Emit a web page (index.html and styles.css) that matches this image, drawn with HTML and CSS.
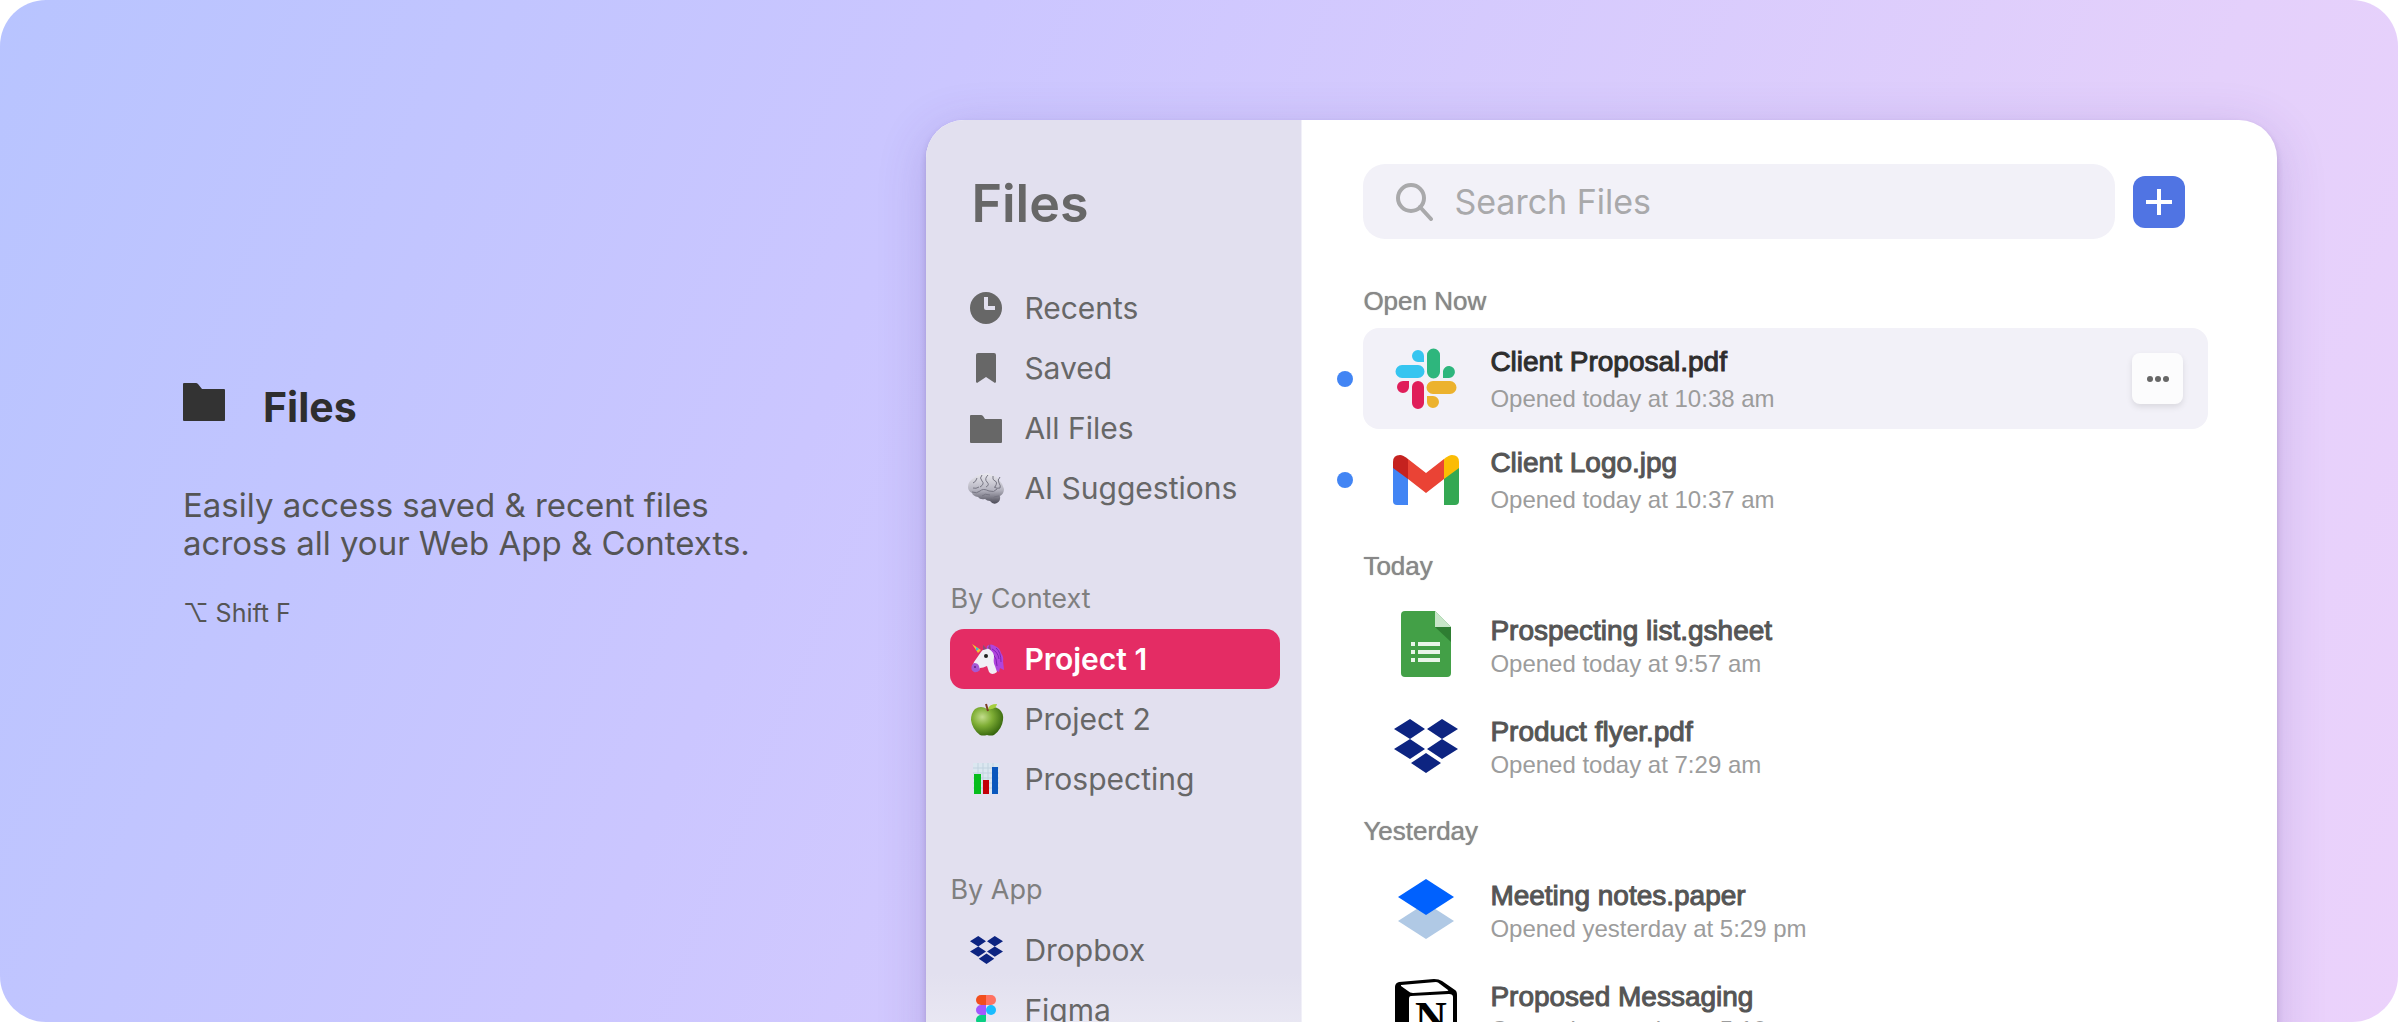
FILE: index.html
```html
<!DOCTYPE html>
<html lang="en">
  <head>
    <meta charset="UTF-8" />
    <meta name="viewport" content="width=device-width, initial-scale=1.0" />
    <title>Files</title>
    <link rel="stylesheet" href="styles.css" />
  </head>

  <body>
    <!-- shared symbols -->
    <svg class="sprite" aria-hidden="true">
      <symbol id="dropbox" viewBox="0 0 64 54">
        <path fill="#0d2481" d="M16 0 31 10 16 20 0 10zM48 0 64 10 48 20 33 10zM16 20 31 30 16 40 0 30zM48 20 64 30 48 40 33 30zM32 34 47 44 32 54 17 44z" />
      </symbol>
      <symbol id="folder" viewBox="0 0 32 28">
        <path fill="currentColor" d="M1 0h10q1 0 2 1l2 3h16q1 0 1 1v22q0 1-1 1H1q-1 0-1-1V1q0-1 1-1z" />
      </symbol>
    </svg>

    <div class="hero">
      <section class="intro">
        <h2 class="intro-title">
          <svg class="intro-icon" viewBox="0 0 42 38">
            <path fill="#333" d="M1 0h12q1 0 2 1l4 5h22q1 0 1 1v30q0 1-1 1H1q-1 0-1-1V1q0-1 1-1z" />
          </svg>
          Files
        </h2>
        <p class="intro-text">
          Easily access saved &amp; recent files<br />
          across all your Web App &amp; Contexts.
        </p>
        <p class="shortcut">&#8997; Shift F</p>
      </section>

      <div class="window">
        <aside class="sidebar">
          <h1>Files</h1>
          <nav>
            <ul class="nav-group">
              <li>
                <a href="#recents">
                  <svg class="nav-icon" viewBox="0 0 36 36">
                    <circle cx="18" cy="18" r="16" fill="#676767" />
                    <path fill="none" stroke="#e2e0ef" stroke-width="4" stroke-linejoin="round" d="M18 7v11h9" />
                  </svg>
                  Recents
                </a>
              </li>
              <li>
                <a href="#saved">
                  <svg class="nav-icon" viewBox="0 0 36 36">
                    <path fill="#676767" d="M10 3h16q2 0 2 2v27l-1 1-9-6-9 6-1-1V5q0-2 2-2z" />
                  </svg>
                  Saved
                </a>
              </li>
              <li>
                <a href="#all">
                  <svg class="nav-icon" viewBox="-2 -5 36 36"><use href="#folder" width="32" height="28" /></svg>
                  All Files
                </a>
              </li>
              <li>
                <a href="#ai">
                  <svg class="nav-icon" viewBox="0 0 36 36">
                    <defs>
                      <linearGradient id="brain" x1="0" y1="0" x2="0" y2="1">
                        <stop offset="0" stop-color="#ebeaf0" />
                        <stop offset=".55" stop-color="#b5b4c0" />
                        <stop offset="1" stop-color="#4d4c58" />
                      </linearGradient>
                    </defs>
                    <path fill="url(#brain)" d="M6 8q4-4 9-4 5-2 9 1 5 1 7 5 4 4 5 9 0 5-4 7 1 5-3 7-4 2-7-2-3 0-5-2-5 1-7-2-5-1-6-4-4-2-4-6 0-6 6-9z" />
                    <path fill="none" stroke="#777683" stroke-width="1" d="M5 13q3-1 4-5m2 9q-3 2-6 1m9-13q-3 3 0 6t-2 6m8-12q-4 4-1 7t-1 5m7-11q-1 4 2 5t0 6m5-10q-3 3-1 6t1 5M4 22q5 2 8-1t9 0q5 2 8-2M14 26q3-3 8-1m2 4q2-3 7-3m-5-9q3 2 6 1" />
                  </svg>
                  AI Suggestions
                </a>
              </li>
            </ul>

            <h3>By Context</h3>
            <ul class="nav-group">
              <li>
                <a href="#project1" class="active">
                  <svg class="nav-icon" viewBox="0 0 36 36">
                    <path fill="#b044dd" d="M19 5q4-3 8 0 5 2 6 7 3 4 2 8l1 9-4-2-1 4-6-3-7-16z" />
                    <path fill="none" stroke="#7e22b4" stroke-width="1" d="M24 8q6 3 7 10m-6-5q4 4 4 12m-1-18q5 4 5 14" />
                    <path fill="#f1eff6" d="M13 11q3-4 8-3 5 3 5 8-1 6 1 9l2 6q-5 4-8 0l-2-6q-4 2-7 2-2 4-5 3-4-2-1-9z" />
                    <path fill="#a558d4" d="M6 22q4 0 5 3l1 4q-3 3-6 2-4-2-2-7z" />
                    <path fill="#f2c530" d="m4 3 9 6-3 3z" />
                    <path fill="#3fb9d5" d="m8 6 3 2-3 2z" />
                    <path fill="#8c4a78" d="M15 9V4l4 4zm5-2 2-4 1 6z" />
                    <circle cx="18" cy="15" r="2" fill="#222" />
                    <circle cx="7" cy="26" r="1" fill="#5c2780" />
                  </svg>
                  Project 1
                </a>
              </li>
              <li>
                <a href="#project2">
                  <svg class="nav-icon" viewBox="0 0 36 36">
                    <defs>
                      <radialGradient id="apple" cx=".35" cy=".35" r=".7">
                        <stop offset="0" stop-color="#c3dd8d" />
                        <stop offset=".45" stop-color="#7fae35" />
                        <stop offset="1" stop-color="#35650d" />
                      </radialGradient>
                    </defs>
                    <path fill="url(#apple)" d="M19 8q6-4 12 0 5 4 4 11-1 9-9 15-3 1-7 0-4 1-7 0-8-6-9-15 0-7 4-11 6-4 12 0z" />
                    <path fill="none" stroke="#7a3c22" stroke-width="2" d="m18 3 2 7" />
                    <path fill="#a5cf3e" d="M20 8q1-5 9-5-1 6-9 5z" />
                  </svg>
                  Project 2
                </a>
              </li>
              <li>
                <a href="#prospecting">
                  <svg class="nav-icon" viewBox="0 0 36 36">
                    <path fill="#dbe7f0" d="M5 2h26v31H5z" />
                    <path stroke="#c1d3e0" stroke-width="1" d="M5 7h26M5 12h26M5 17h26M5 22h26M5 27h26M10 2v31M15 2v31M20 2v31M25 2v31" />
                    <path fill="#06bd1c" d="M6 13h7v20H6z" />
                    <path fill="#c30008" d="M15 19h6v14h-6z" />
                    <path fill="#0957bd" d="M24 6h6v27h-6z" />
                  </svg>
                  Prospecting
                </a>
              </li>
            </ul>

            <h3>By App</h3>
            <ul class="nav-group">
              <li>
                <a href="#dropbox-app">
                  <svg class="nav-icon" viewBox="0 0 36 36"><use href="#dropbox" x="2" y="4" width="33" height="28" /></svg>
                  Dropbox
                </a>
              </li>
              <li>
                <a href="#figma">
                  <svg class="nav-icon" viewBox="0 0 36 36">
                    <path fill="#f24e1e" d="M18 3h-5a5 5 0 0 0 0 10h5z" />
                    <path fill="#ff7262" d="M18 3h5a5 5 0 0 1 0 10h-5z" />
                    <path fill="#a259ff" d="M18 13h-5a5 5 0 0 0 0 10h5z" />
                    <circle cx="23" cy="18" r="5" fill="#1abcfe" />
                    <path fill="#0acf83" d="M13 23h5v5a5 5 0 1 1-5-5z" />
                  </svg>
                  Figma
                </a>
              </li>
            </ul>
          </nav>
        </aside>

        <main class="content">
          <div class="toolbar">
            <label class="search">
              <svg class="search-icon" viewBox="0 0 38 38">
                <circle cx="15" cy="15" r="13" fill="none" stroke="#a9a9ab" stroke-width="4" />
                <path stroke="#a9a9ab" stroke-width="4" stroke-linecap="round" d="m24 24 11 12" />
              </svg>
              <input type="search" placeholder="Search Files" aria-label="Search Files" />
            </label>
            <button class="add" aria-label="Add file">
              <svg viewBox="0 0 26 26"><path stroke="#fff" stroke-width="4" d="M13 0v26M0 13h26" /></svg>
            </button>
          </div>

          <section>
            <h4>Open Now</h4>
            <ul class="file-list open">
              <li>
                <span class="dot"></span>
                <div class="file selected">
                  <svg class="file-icon" viewBox="0 0 70 70">
                    <path fill="#36c5f0" d="M33 18h-6a6 6 0 1 1 6-6zM11 21h16a6 6 0 0 1 0 13H11a6 6 0 0 1 0-13z" />
                    <path fill="#2eb67d" d="M36 11a6 6 0 0 1 13 0v17a6 6 0 0 1-13 0zM52 34v-7a6 6 0 1 1 6 7z" />
                    <path fill="#ecb22e" d="M42 37h17a6 6 0 0 1 0 13H42a6 6 0 0 1 0-13zM36 52h6a6 6 0 1 1-6 6z" />
                    <path fill="#e01e5a" d="M18 37v6a6 6 0 1 1-6-6zM21 43a6 6 0 0 1 12 0v16a6 6 0 0 1-12 0z" />
                  </svg>
                  <div class="file-text">
                    <p class="file-name">Client Proposal.pdf</p>
                    <p class="file-date">Opened today at 10:38 am</p>
                  </div>
                  <button class="more" aria-label="More options">
                    <svg viewBox="0 0 22 6" fill="#676767">
                      <circle cx="3" cy="3" r="3" /><circle cx="11" cy="3" r="3" /><circle cx="19" cy="3" r="3" />
                    </svg>
                  </button>
                </div>
              </li>
              <li>
                <span class="dot"></span>
                <div class="file">
                  <svg class="file-icon" viewBox="0 0 70 70">
                    <path fill="#4285f4" d="M2 22v34q0 4 4 4h11V33z" />
                    <path fill="#34a853" d="M68 22v34q0 4-4 4H53V33z" />
                    <path fill="#c5221f" d="M2 23v-6q0-7 7-7 3 0 8 4v20z" />
                    <path fill="#fbbc04" d="M68 23v-6q0-7-7-7-3 0-8 4v20z" />
                    <path fill="#ea4335" d="m17 14 18 14 18-14v20L35 48 17 34z" />
                  </svg>
                  <div class="file-text">
                    <p class="file-name">Client Logo.jpg</p>
                    <p class="file-date">Opened today at 10:37 am</p>
                  </div>
                </div>
              </li>
            </ul>
          </section>

          <section>
            <h4>Today</h4>
            <ul class="file-list">
              <li>
                <div class="file">
                  <svg class="file-icon" viewBox="0 0 70 70">
                    <path fill="#43a047" d="M14 2h30l16 16v46q0 4-4 4H14q-4 0-4-4V6q0-4 4-4z" />
                    <path fill="#c8e6c9" d="m44 2 16 16H44z" />
                    <path fill="#2e7d32" d="M44 18h16v15z" />
                    <path fill="#e8f5e9" d="M20 33h4v4h-4zm7 0h22v4H27zm-7 8h4v4h-4zm7 0h22v4H27zm-7 8h4v4h-4zm7 0h22v4H27z" />
                  </svg>
                  <div class="file-text">
                    <p class="file-name">Prospecting list.gsheet</p>
                    <p class="file-date">Opened today at 9:57 am</p>
                  </div>
                </div>
              </li>
              <li>
                <div class="file">
                  <svg class="file-icon" viewBox="0 0 70 70"><use href="#dropbox" x="3" y="9" width="64" height="54" /></svg>
                  <div class="file-text">
                    <p class="file-name">Product flyer.pdf</p>
                    <p class="file-date">Opened today at 7:29 am</p>
                  </div>
                </div>
              </li>
            </ul>
          </section>

          <section>
            <h4>Yesterday</h4>
            <ul class="file-list">
              <li>
                <div class="file">
                  <svg class="file-icon" viewBox="0 0 70 70">
                    <path fill="#b0c9e5" d="m35 29 28 18-28 18L7 47z" />
                    <path fill="#0061fe" d="m35 5 28 18-28 18L7 23z" />
                  </svg>
                  <div class="file-text">
                    <p class="file-name">Meeting notes.paper</p>
                    <p class="file-date">Opened yesterday at 5:29 pm</p>
                  </div>
                </div>
              </li>
              <li>
                <div class="file">
                  <svg class="file-icon" viewBox="0 0 70 70">
                    <path fill="#000" d="M8 7 43 4q5 0 8 2l13 9q2 1 2 5v41q0 5-5 5l-37 2q-4 0-6-3L7 52q-3-3-3-6V12q0-4 4-5z" />
                    <path fill="#fff" d="m10 10 35-3q2 0 4 2l8 6q1 1-1 1l-34 2q-3 0-5-2l-7-5zM20 21l38-2q4 0 4 3v38q0 2-3 3l-37 2q-4 0-4-3V24q0-3 2-3z" />
                    <text class="notion-n" x="40" y="57" text-anchor="middle">N</text>
                  </svg>
                  <div class="file-text">
                    <p class="file-name">Proposed Messaging</p>
                    <p class="file-date">Opened yesterday at 5:10 pm</p>
                  </div>
                </div>
              </li>
            </ul>
          </section>
        </main>
      </div>
    </div>
  </body>
</html>
```
FILE: styles.css
```css
* {
  margin: 0;
  padding: 0;
  box-sizing: border-box;
}

body {
  background-color: #ffffff;
  font-family: "Inter", sans-serif;
}

ul {
  list-style: none;
}

a {
  color: inherit;
  text-decoration: none;
}

button {
  border: none;
  cursor: pointer;
}

.sprite {
  display: none;
}

.hero {
  display: flex;
  height: 100vh;
  overflow: hidden;
  margin-right: 2px;
  padding: 120px 121px 0 183px;
  border-radius: 46px;
  background: linear-gradient(112deg, #b8c4ff 0%, #cbc6ff 35%, #e4d0fb 80%, #ebd2fb 100%);
}

/* left text */

.intro {
  flex: 1;
  padding-top: 263px;
}

.intro-title {
  display: flex;
  align-items: center;
  gap: 38px;
  color: #2e2e2e;
  font-size: 41px;
  line-height: 48px;
  font-weight: 700;
}

.intro-icon {
  width: 42px;
  height: 38px;
  margin-bottom: 10px;
}

.intro-text {
  margin-top: 55px;
  color: #555555;
  font-size: 33px;
  line-height: 38px;
  white-space: nowrap;
}

.shortcut {
  margin-top: 36px;
  color: #555555;
  font-size: 25px;
  line-height: 30px;
}

/* app window */

.window {
  display: flex;
  width: 64.5%;
  min-height: 1080px;
  border-radius: 38px;
  overflow: hidden;
  background-color: #ffffff;
  box-shadow: 0 4px 6px rgba(50, 30, 90, 0.2), 0 10px 50px rgba(80, 50, 150, 0.2);
}

.sidebar {
  width: 376px;
  flex-shrink: 0;
  padding: 51px 21px 0 24px;
  border-right: 1px solid #f1f0f8;
  background: linear-gradient(#e2e0ef 79%, #ffffff 100%);
  color: #676767;
}

.sidebar h1 {
  padding-left: 21px;
  margin-bottom: 41px;
  font-size: 52px;
  line-height: 66px;
  font-weight: 600;
}

.sidebar h3 {
  margin-top: 64px;
  margin-bottom: 13px;
  color: #7f7f7f;
  font-size: 27px;
  line-height: 34px;
  font-weight: 400;
}

.nav-group a {
  display: flex;
  align-items: center;
  gap: 20px;
  height: 60px;
  padding-left: 18px;
  border-radius: 14px;
  font-size: 30px;
}

.nav-group a.active {
  background-color: #e42c64;
  color: #ffffff;
  font-weight: 600;
}

.nav-icon {
  width: 36px;
  height: 36px;
}

.content {
  flex: 1;
  padding: 44px 69px 0 35px;
}

.toolbar {
  display: flex;
  align-items: center;
  gap: 18px;
  padding: 0 23px 0 26px;
  margin-bottom: 46px;
}

.search {
  display: flex;
  align-items: center;
  gap: 20px;
  flex: 1;
  height: 75px;
  padding: 0 33px;
  border-radius: 22px;
  background-color: #f2f1f8;
}

.search-icon {
  width: 38px;
  height: 38px;
}

.search input {
  flex: 1;
  border: none;
  outline: none;
  background: none;
  font-family: inherit;
  font-size: 34px;
}

.search input::placeholder {
  color: #a9a9ab;
}

.add {
  width: 52px;
  height: 52px;
  border-radius: 12px;
  background-color: #5074e3;
}

.add svg {
  display: block;
  width: 26px;
  margin: auto;
}

.content h4 {
  padding-left: 26px;
  margin-bottom: 11px;
  color: #888888;
  font-family: "Liberation Sans", sans-serif;
  font-size: 26px;
  line-height: 32px;
  font-weight: 500;
  text-shadow: 0 0 1px #888888;
}

.file-list {
  margin-bottom: 20px;
}

.file-list li {
  display: flex;
  align-items: center;
  justify-content: flex-end;
  gap: 10px;
}

.dot {
  width: 16px;
  height: 16px;
  border-radius: 50%;
  background-color: #4285f4;
}

.file {
  display: flex;
  align-items: center;
  width: calc(100% - 26px);
  height: 101px;
  padding: 0 25px 0 28px;
  border-radius: 16px;
}

.file.selected {
  background-color: #f2f1f8;
}

.file-icon {
  width: 70px;
  height: 70px;
}

.file-text {
  flex: 1;
  padding-left: 29px;
  padding-top: 7px;
  font-family: "Liberation Sans", sans-serif;
  line-height: 33px;
}

.file-name {
  color: #555555;
  font-size: 28px;
  -webkit-text-stroke: 1px #555555;
}

.file-date {
  color: #9c9c9c;
  font-size: 24px;
}

.open .file-text {
  padding-top: 3px;
  line-height: 37px;
}

.selected .file-name {
  color: #2e2e2e;
  -webkit-text-stroke-color: #2e2e2e;
}

.more {
  width: 51px;
  height: 51px;
  border-radius: 8px;
  background-color: #fcfcfd;
  box-shadow: 0 3px 6px rgba(0, 0, 0, 0.1);
}

.more svg {
  display: block;
  width: 22px;
  margin: auto;
}

.notion-n {
  font-family: "Liberation Serif", serif;
  font-size: 44px;
  font-weight: 700;
}
```
